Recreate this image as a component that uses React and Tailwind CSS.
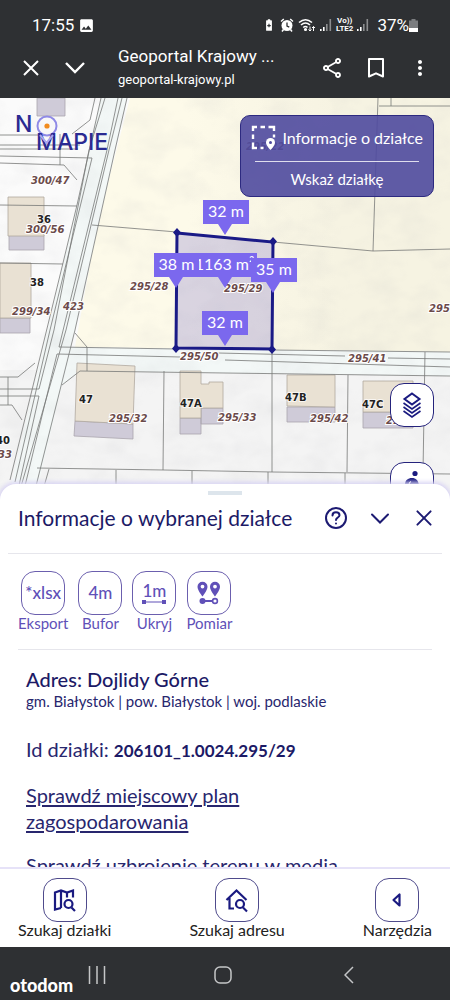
import { LuX } from "react-icons/lu";
import { MdBatterySaver, MdImage, MdMoreVert, MdOutlineShare } from "react-icons/md";

const parcelLines = [
  "M0 135H38M0 145H80M0 149H78M0 156L92 158M72 134L90 120L95 98M60 134V165",
  "M0 163L64 165L77 180M0 205L77 206M0 263L63 264",
  "M101 98L77 205L63 263L10 480",
  "M92 158L50 330L15 482M105 98L89 150L54 330L39 389H0",
  "M118 98L107 150L59 347L177 349M122 98L109 150L66 330L20 490",
  "M127 98L115 150L75 330L35 490M39 396H0M39 396L18 490M57 354L24 490",
  "M92 225L177 232M273 242L373 251L450 249M378 98L373 251M379 106H450M391 98V106",
  "M272 350L450 352M57 354L180 357M218 353L345 356M388 358L450 359M225 360L450 367",
  "M62 385L80 371L225 373L450 376M75 333L87 347V371",
  "M164 371L163 470M272 350V472M348 375L347 472M425 352L423 472",
  "M37 468L164 470L272 472L450 474M49 469L43 490M116 470V496M192 471V496M268 472V496M345 473V496",
  "M0 377H18L35 363M8 377V405M0 405H12L22 420",
];

const plotLabels = [
  { x: 31, y: 184, text: "300/47" },
  { x: 26, y: 233, text: "300/56" },
  { x: 12, y: 315, text: "299/34" },
  { x: 63, y: 310, text: "423" },
  { x: 130, y: 290, text: "295/28" },
  { x: 224, y: 292, text: "295/29" },
  { x: 180, y: 360, text: "295/50" },
  { x: 348, y: 362, text: "295/41" },
  { x: 109, y: 422, text: "295/32" },
  { x: 218, y: 421, text: "295/33" },
  { x: 310, y: 422, text: "295/42" },
  { x: 386, y: 424, text: "295/43" },
  { x: 246, y: 150, text: "295/22" },
  { x: 429, y: 312, text: "295" },
  { x: -2, y: 458, text: "33" },
];

const houseLabels = [
  { x: 37, y: 223, text: "36" },
  { x: 30, y: 286, text: "38" },
  { x: 79, y: 403, text: "47" },
  { x: 180, y: 407, text: "47A" },
  { x: 285, y: 401, text: "47B" },
  { x: 362, y: 408, text: "47C" },
  { x: -4, y: 444, text: "40" },
];

const measures = [
  { x: 203, y: 200, w: 46, tip: 225, text: "32 m" },
  { x: 192, y: 253, w: 65, tip: 225, text: "1163 m²" },
  { x: 154, y: 253, w: 45, tip: 176, text: "38 m" },
  { x: 251, y: 258, w: 46, tip: 273, text: "35 m" },
  { x: 202, y: 311, w: 46, tip: 225, text: "32 m" },
];

function Signal() {
  return (
    <svg viewBox="0 0 12 12" className="h-3 w-3" fill="#fff">
      <path d="M0 10h1.6v2H0zM3 8h1.6v4H3z" />
      <path d="M6 5h1.6v7H6zM9.500 0h1.600v12H9.500z" opacity="0.45" />
    </svg>
  );
}

function StatusBar() {
  return (
    <div className="flex items-center justify-between px-8">
      <div className="flex items-center gap-1">
        <span className="text-[17px] leading-6">17:55</span>
        <MdImage className="h-[17px] w-[17px]" />
      </div>
      <div className="flex items-center gap-1">
        <MdBatterySaver className="h-[14px] w-[14px]" />
        <svg viewBox="0 0 14 14" className="h-[14px] w-[14px]" fill="none" stroke="#fff" strokeWidth="1.500">
          <circle cx="7" cy="7.500" r="5.500" fill="#fff" stroke="none" />
          <path d="M1 3.500L3.800 1M13 3.500L10.200 1M3.500 11.500L2 13.500M10.500 11.500l1.500 2" />
          <path d="M7 4.500v3.500l2.300 1.200" stroke="#2e3033" strokeWidth="1.300" />
        </svg>
        <svg viewBox="0 0 18 14" className="h-[14px] w-[18px]" fill="none" stroke="#fff" strokeWidth="1.600">
          <path d="M1 4.500Q7.500-1 14 4.500M3 7Q7.500 3 12 7M5.200 9.500Q7.500 7.500 9.500 9.500" />
          <circle cx="7.500" cy="11.500" r="0.800" fill="#fff" />
          <path d="M12 13V8.500m-1.500 3L12 13l1.500-1.500M15.500 13V8.500M14 10l1.500-1.500L17 10" strokeWidth="1" />
        </svg>
        <Signal />
        <span className="text-center text-[8px] leading-[8px] font-bold">
          Vo))
          <br />
          LTE2
        </span>
        <Signal />
        <span className="ml-1 text-[17px] leading-6">37%</span>
        <svg viewBox="0 0 9 13" className="-ml-1 h-[13px] w-[9px]">
          <path d="M2.500 0h4v1.500H9V13H0V1.500h2.500z" fill="#7b7d80" />
          <path d="M0 9h9v4H0z" fill="#fff" />
        </svg>
      </div>
    </div>
  );
}

function BrowserBar() {
  return (
    <div className="flex items-center pr-[18px] pl-[17px]">
      <button aria-label="Zamknij kartę" className="flex w-7 justify-center">
        <svg viewBox="0 0 16 16" className="h-4 w-4" stroke="#fff" strokeWidth="2">
          <path d="M1 1l14 14M15 1L1 15" />
        </svg>
      </button>
      <button aria-label="Zwiń kartę" className="ml-4 flex w-7 justify-center">
        <svg viewBox="0 0 20 12" className="h-3 w-5" fill="none" stroke="#fff" strokeWidth="2.400">
          <path d="M1 1l9 9 9-9" />
        </svg>
      </button>
      <div className="ml-[29px] min-w-0 flex-1">
        <div className="truncate text-[17px] leading-6">Geoportal Krajowy ...</div>
        <div className="truncate text-[13px] leading-6">geoportal-krajowy.pl</div>
      </div>
      <div className="flex items-center gap-5">
        <button aria-label="Udostępnij">
          <MdOutlineShare className="h-6 w-6" />
        </button>
        <button aria-label="Dodaj zakładkę" className="flex w-6 justify-center">
          <svg viewBox="0 0 16 20" className="h-5 w-4" fill="none" stroke="#fff" strokeWidth="2">
            <path d="M1 1h14v17.500l-7-3.200-7 3.200z" strokeLinejoin="round" />
          </svg>
        </button>
        <button aria-label="Więcej">
          <MdMoreVert className="h-6 w-6" />
        </button>
      </div>
    </div>
  );
}

function Measure({ x, y, w, tip, text }) {
  return (
    <g>
      <path d={`M${x} ${y}h${w}v24H${tip + 7}L${tip} ${y + 35}L${tip - 7} ${y + 24}H${x}z`} fill="#7b68ee" />
      <text x={x + w / 2} y={y + 17} textAnchor="middle" fill="#fff" className="text-[16px]">
        {text}
      </text>
    </g>
  );
}

function PlotMap() {
  return (
    <svg viewBox="0 98 450 398" preserveAspectRatio="xMidYMin slice" className="absolute inset-0 h-full w-full">
      <defs>
        <filter id="relief" x="0" y="0" width="1" height="1">
          <feTurbulence type="fractalNoise" baseFrequency="0.03 0.045" numOctaves="3" seed="4" />
          <feColorMatrix values="0 0 0 0 0.450 0 0 0 0 0.450 0 0 0 0 0.480 1.600 0 0 0 -0.620" />
        </filter>
        <linearGradient id="field">
          <stop offset="0.3" stopColor="#fdfae9" />
          <stop offset="0.7" stopColor="#f6f3e2" />
        </linearGradient>
      </defs>
      <rect y="98" width="450" height="398" fill="#fbfbfb" />
      <path d="M0 370H450V496H0z" fill="#f4f4f4" />
      <path d="M130 98H450V352L75 347L97 225z" fill="url(#field)" />
      <path d="M101 98H127L75 330L70 347L450 352V376L80 371L62 385L37 490H10L77 205z" fill="#f3f8f7" />
      <rect y="98" width="450" height="398" filter="url(#relief)" opacity="0.15" />

      <g fill="#cfcbd8" stroke="#aaa5ad" strokeWidth="0.8">
        <path d="M37 98H65V116H37zM9 235H44V250H9zM0 318H30V333H0z" />
        <path d="M75 421L133 424V439L74 436zM180 418H201V434H180zM201 408H223V424H201z" />
        <path d="M287 407H335V422H287zM363 412H413V428H363z" />
      </g>
      <g fill="#e9e1d3" stroke="#b0a8a0" strokeWidth="0.8">
        <path d="M8 197H44V236H8zM0 263H31V318H0z" />
        <path d="M77 363L135 366L133 424L75 421z" />
        <path d="M180 371H201V384H209V382H223V408H201V418H180z" />
        <path d="M287 375H335V407L287 406zM363 381H413V412H363z" />
      </g>
      <g fill="none" stroke="#777977" strokeWidth="0.8">
        {parcelLines.map((d) => (
          <path key={d} d={d} />
        ))}
      </g>

      <path d="M177 233L273 242L272 349L176 348z" fill="#6f62c8" fillOpacity="0.25" stroke="#1a1a86" strokeWidth="3" />
      <path
        d="M177 228l4 4.500-4 4.500-4-4.500zM273 237l4 4.500-4 4.500-4-4.500zM272 345l4 4.500-4 4.500-4-4.500zM176 344l4 4.500-4 4.500-4-4.500z"
        fill="#1a1a86"
      />

      <g
        fill="#6b4a4a"
        stroke="#fff"
        strokeWidth="2"
        paintOrder="stroke"
        className="font-['DejaVu_Sans',sans-serif] text-[10px] font-bold italic"
      >
        {plotLabels.map((l) => (
          <text key={l.text} x={l.x} y={l.y}>
            {l.text}
          </text>
        ))}
      </g>
      <g
        fill="#222"
        stroke="#fff"
        strokeOpacity="0.7"
        strokeWidth="2"
        paintOrder="stroke"
        className="font-['DejaVu_Sans',sans-serif] text-[10px] font-bold"
      >
        {houseLabels.map((l) => (
          <text key={l.text} x={l.x} y={l.y}>
            {l.text}
          </text>
        ))}
      </g>
      {measures.map((m) => (
        <Measure key={`${m.x}-${m.y}`} {...m} />
      ))}
    </svg>
  );
}

function Logo() {
  return (
    <svg viewBox="0 0 106 46" className="absolute top-[14px] left-4 h-[46px] w-[106px]" role="img" aria-label="No Mapie">
      <circle cx="31" cy="14" r="9.500" fill="none" stroke="#8f8ae6" strokeWidth="2" />
      <circle cx="31" cy="14" r="2.600" fill="#f28c1e" />
      <g fill="#2a2a92" className="font-[Inter,sans-serif] text-[23px] font-medium">
        <text x="-1" y="20">N</text>
        <text x="20" y="38">MAPIE</text>
      </g>
      <path d="M24 23l6.500 8 6.500-8" fill="none" stroke="#a9a5ee" strokeWidth="2" />
    </svg>
  );
}

function MapView() {
  return (
    <section aria-label="Mapa" className="relative h-[398px] shrink-0 overflow-hidden bg-[#f8f8f8]">
      <PlotMap />
      <Logo />
      <div className="absolute top-[17px] right-[16px] w-[194px] rounded-[10px] border border-[#2d2a80] bg-[#4f4a9e]/90 px-[10px] text-white">
        <button className="flex h-[43px] w-full items-center justify-between text-[16px] whitespace-nowrap">
          <svg viewBox="0 0 26 26" className="h-[26px] w-[26px]" fill="none" stroke="#fff" strokeWidth="2.400">
            <path d="M2 6V2h4M9.500 2h4.500M17.500 2H23v4M23 9.500v3M2 9.500V14M2 17.500V23h4M9.500 23h3" />
            <path d="M19.500 25s-4.500-4.500-4.500-7.500a4.500 4.500 0 019 0c0 3-4.500 7.500-4.500 7.500z" fill="#fff" stroke="none" />
            <circle cx="19.500" cy="17.500" r="1.500" fill="#4f4a9e" stroke="none" />
          </svg>
          Informacje o działce
        </button>
        <div className="mx-1 mt-[2px] h-px bg-white/80" />
        <button className="block h-[34px] w-full text-[15px]">Wskaż działkę</button>
      </div>
      <div className="absolute top-[285px] right-[16px] flex flex-col gap-[35px]">
        <button
          aria-label="Warstwy"
          className="flex h-11 w-11 items-center justify-center rounded-[14px] border border-[#25237c] bg-white"
        >
          <svg viewBox="0 0 20 26" className="h-[26px] w-5" fill="none" stroke="#1a1a80" strokeWidth="2">
            <path d="M10 1.500l7.500 5.500-7.500 5.500-7.500-5.500z" />
            <path d="M1.500 11l8.500 6 8.500-6M1.500 15l8.500 6 8.500-6M1.500 19l8.500 6 8.500-6" strokeWidth="1.600" />
          </svg>
        </button>
        <button
          aria-label="Widok ulicy"
          className="flex h-11 w-11 items-center justify-center rounded-[14px] border border-[#25237c] bg-white"
        >
          <svg viewBox="0 0 24 28" className="h-7 w-6" fill="#1a1a80">
            <circle cx="15" cy="3.500" r="2.600" />
            <path d="M5 15c0-5 3-7 7-7s6 2 7 7l-4 2v9h-5V17z" />
            <path d="M9 15c0-2 .8-3 2-3.500" fill="none" stroke="#fff" strokeWidth="1.200" />
          </svg>
        </button>
      </div>
    </section>
  );
}

const tools = [
  { label: "Eksport", icon: <span className="text-[17px]">*xlsx</span> },
  { label: "Bufor", icon: <span className="text-[17px]">4m</span> },
  {
    label: "Ukryj",
    icon: (
      <span className="flex flex-col items-center text-[17px] leading-[18px]">
        1m
        <svg viewBox="0 0 24 4" className="h-1 w-6" fill="#6050b8">
          <path d="M0 0h4v4H0zM20 0h4v4h-4zM4 1.500h16v1H4z" />
        </svg>
      </span>
    ),
  },
  {
    label: "Pomiar",
    icon: (
      <svg viewBox="0 0 24 24" className="h-6 w-6" fill="#6050b8">
        <path
          fillRule="evenodd"
          d="M5.500 15.500S.5 9.500.5 5.800a5 5 0 0110 0C10.500 9.500 5.500 15.500 5.500 15.500zm0-8a1.900 1.900 0 100-3.800 1.900 1.900 0 000 3.800zM18 15.500s-5-6-5-9.700a5 5 0 0110 0c0 3.700-5 9.700-5 9.700zm0-8a1.900 1.900 0 100-3.800 1.900 1.900 0 000 3.800z"
        />
        <circle cx="5.500" cy="20" r="3" />
        <path d="M6 19h9v2H6z" />
        <circle cx="18" cy="20" r="2.400" fill="none" stroke="#6050b8" strokeWidth="1.600" />
      </svg>
    ),
  },
];

function InfoSheet() {
  return (
    <section className="relative z-10 -mt-3 min-h-0 flex-1 overflow-hidden rounded-t-[16px] bg-white text-[#28266e] shadow-[0_0_4px_2px_#d9d4f3]">
      <div className="mx-auto mt-[7px] h-1 w-[34px] bg-[#dde5ec]" />
      <div className="mx-2 flex h-[59px] items-center justify-between border-b border-[#e6e6ec] pr-[6px] pb-[13px] pl-[10px]">
        <h1 className="text-[21px] whitespace-nowrap text-[#1c1a66]">Informacje o wybranej działce</h1>
        <div className="flex items-center gap-5">
          <button aria-label="Pomoc">
            <svg viewBox="0 0 24 24" className="h-6 w-6" fill="none" stroke="#1c1a72" strokeWidth="2" strokeLinecap="round">
              <circle cx="12" cy="12" r="10" />
              <path d="M8.500 9.500c0-2 1.500-3.200 3.500-3.200s3.500 1.200 3.500 3c0 2.200-3.500 2.300-3.500 4.700M12 17.500v.1" />
            </svg>
          </button>
          <button aria-label="Zwiń">
            <svg viewBox="0 0 24 24" className="h-6 w-6" fill="none" stroke="#1c1a72" strokeWidth="2" strokeLinecap="round">
              <path d="M4 8.500l8 8 8-8" />
            </svg>
          </button>
          <button aria-label="Zamknij">
            <LuX className="h-6 w-6 scale-110 text-[#1c1a72]" strokeWidth={1.8} />
          </button>
        </div>
      </div>

      <div className="mx-[18px] flex items-start gap-[10px] border-b border-[#e6e6ec] pt-[17px] pb-[18px] text-[#6050b8]">
        {tools.map((tool) => (
          <button key={tool.label} className="flex flex-col items-center text-[15px] leading-4">
            <span className="flex h-11 w-11 items-center justify-center rounded-[14px] border border-[#6b5fae] font-medium">
              {tool.icon}
            </span>
            {tool.label}
          </button>
        ))}
      </div>

      <div className="px-[26px] pt-4">
        <p className="text-[20px] leading-[26px] font-medium text-[#1c1a66]">Adres: Dojlidy Górne</p>
        <p className="text-[15px] leading-[18px]">gm. Białystok | pow. Białystok | woj. podlaskie</p>
        <p className="mt-[26px] text-[20px] leading-[26px]">
          Id działki: <b className="text-[17px] text-[#1c1a66]">206101_1.0024.295/29</b>
        </p>
        <p className="mt-[18px] max-w-[250px] text-[20px] leading-[26px]">
          <a href="#plan" className="underline underline-offset-2">
            Sprawdź miejscowy plan zagospodarowania
          </a>
        </p>
        <p className="mt-[18px] text-[20px] leading-[26px] whitespace-nowrap">
          <a href="#media" className="underline underline-offset-2">
            Sprawdź uzbrojenie terenu w media
          </a>
        </p>
      </div>
    </section>
  );
}

const navItems = [
  {
    label: "Szukaj działki",
    icon: (
      <>
        <path d="M9 21l-6 1.500V5.500l6-2 6 2 6-2v7M9 3.500V21M15 5.500v5" />
        <circle cx="16.500" cy="17" r="4" />
        <path d="M19.500 20.500L23 24" />
      </>
    ),
  },
  {
    label: "Szukaj adresu",
    icon: (
      <>
        <path d="M2.500 13L12.500 3.500 22.500 13M5.500 11v10.500H10" />
        <circle cx="16" cy="17" r="4" />
        <path d="M19 20.500L23 24.500" />
      </>
    ),
  },
  {
    label: "Narzędzia",
    icon: <path d="M15.500 7.500v11L9.500 13z" strokeLinejoin="round" />,
  },
];

function BottomNav() {
  return (
    <nav className="relative z-20 flex h-20 shrink-0 justify-between border-t-2 border-[#e6e2f8] bg-white px-[18px] pt-[9px]">
      {navItems.map((item) => (
        <button key={item.label} className="flex flex-col items-center self-start text-[16px] leading-4 text-[#222]">
          <span className="flex h-11 w-11 items-center justify-center rounded-[14px] border border-[#4f4b8c]">
            <svg viewBox="0 0 26 26" className="h-[26px] w-[26px]" fill="none" stroke="#1a1a80" strokeWidth="2.200">
              {item.icon}
            </svg>
          </span>
          {item.label}
        </button>
      ))}
    </nav>
  );
}

function SystemBar() {
  return (
    <footer className="relative z-20 grid h-[53px] shrink-0 grid-cols-[1fr_auto_1fr] bg-[#2e3033] pr-1 text-white">
      <div className="flex items-start justify-between pl-[10px]">
        <span className="mt-[26px] text-[18px] leading-6 font-black">otodom</span>
        <button aria-label="Ostatnie" className="mt-[19px] mr-[108px]">
          <svg viewBox="0 0 18 18" className="h-[18px] w-[18px]" stroke="#c5c6c8" strokeWidth="1.500">
            <path d="M1.500 0v18M9 0v18M16.500 0v18" />
          </svg>
        </button>
      </div>
      <button aria-label="Ekran główny" className="mt-[19px] self-start">
        <svg viewBox="0 0 18 18" className="h-[18px] w-[18px]" fill="none" stroke="#c5c6c8" strokeWidth="1.500">
          <rect x="1" y="1" width="16" height="16" rx="5" />
        </svg>
      </button>
      <button aria-label="Wstecz" className="mt-[19px] ml-[112px] self-start justify-self-start">
        <svg viewBox="0 0 10 18" className="h-[18px] w-[10px]" fill="none" stroke="#c5c6c8" strokeWidth="1.500">
          <path d="M9 1L1 9l8 8" />
        </svg>
      </button>
    </footer>
  );
}

export default function App() {
  return (
    <div className="flex h-screen flex-col overflow-hidden bg-white font-[Lato,sans-serif]">
      <header className="h-[98px] shrink-0 bg-[#2e3033] pt-[13px] font-[Roboto,sans-serif] text-white">
        <StatusBar />
        <div className="mt-[7px]">
          <BrowserBar />
        </div>
      </header>
      <MapView />
      <InfoSheet />
      <BottomNav />
      <SystemBar />
    </div>
  );
}
